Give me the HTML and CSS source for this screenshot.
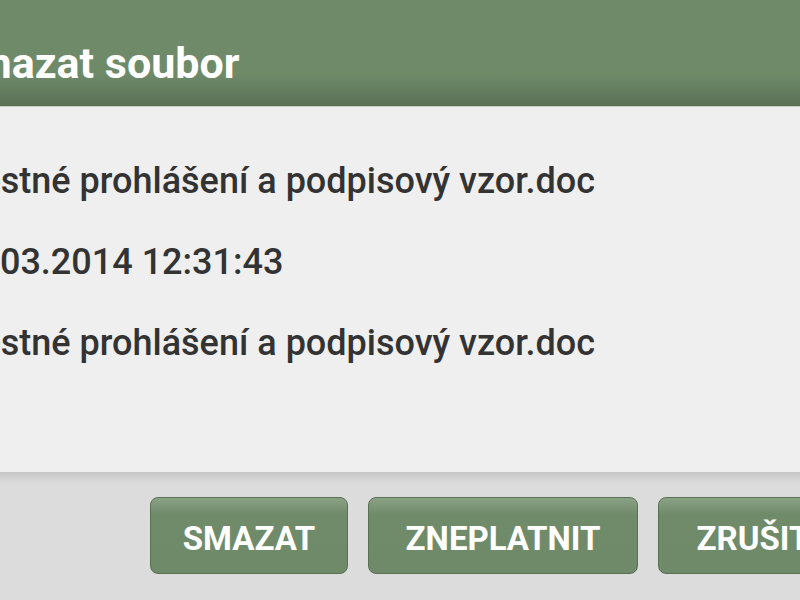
FILE: index.html
```html
<!DOCTYPE html>
<html lang="cs">
<head>
<meta charset="utf-8">
<title>Smazat soubor</title>
<link rel="stylesheet" href="styles.css">
</head>
<body>
<div class="dialog">
  <header class="dialog-header">
    <h1 class="dialog-title">Smazat soubor</h1>
  </header>
  <section class="dialog-body">
    <p class="row">Čestné prohlášení a podpisový vzor.doc</p>
    <p class="row row-date">14.03.2014 12:31:43</p>
    <p class="row">Čestné prohlášení a podpisový vzor.doc</p>
  </section>
  <footer class="dialog-footer">
    <button class="btn btn-delete" type="button">SMAZAT</button>
    <button class="btn btn-invalidate" type="button">ZNEPLATNIT</button>
    <button class="btn btn-cancel" type="button">ZRUŠIT</button>
  </footer>
</div>
</body>
</html>
```

FILE: styles.css
```css
html, body {
  margin: 0;
  padding: 0;
  height: 100%;
  overflow: hidden;
  background: #dcdcdc;
}

.dialog {
  margin-left: -52px;
  width: 960px;
  display: flex;
  flex-direction: column;
  height: 100%;
  font-family: Roboto, "Noto Sans", sans-serif;
}

.dialog-header {
  box-sizing: border-box;
  height: 107px;
  padding-top: 42px;
  background: linear-gradient(to bottom, #6e8a69 0%, #6e8a69 70%, #5a7055 100%);
  border-bottom: 1px solid #c9cec7;
}

.dialog-title {
  margin: 0;
  font-size: 43px;
  line-height: 43px;
  font-weight: 700;
  color: #ffffff;
  white-space: nowrap;
}

.dialog-body {
  box-sizing: border-box;
  height: 365px;
  padding: 56px 0 0 10px;
  background: #efefef;
  display: flex;
  flex-direction: column;
  gap: 45px;
}

.row {
  margin: 0;
  font-size: 36px;
  line-height: 36px;
  font-weight: 500;
  color: #333333;
  white-space: nowrap;
}

.row-date {
  margin-left: -9px;
}

.dialog-footer {
  flex: 1;
  display: flex;
  align-items: flex-start;
  gap: 20px;
  padding: 25px 0 0 202px;
  background: linear-gradient(to bottom, #c6c6c6 0px, #dcdcdc 12px, #dcdcdc 100%);
}

.btn {
  box-sizing: border-box;
  height: 77px;
  padding: 6px 0 0;
  border: 1px solid #5a7055;
  border-radius: 8px;
  background: linear-gradient(to bottom, #8aa285 0px, #708b6a 16px, #6e8a69 100%);
  font-family: Roboto, "Noto Sans", sans-serif;
  font-size: 33px;
  line-height: 33px;
  font-weight: 700;
  color: #ffffff;
  text-align: center;
  white-space: nowrap;
  flex-shrink: 0;
}

.btn-delete {
  width: 198px;
}

.btn-invalidate {
  width: 270px;
}

.btn-cancel {
  width: 190px;
}
```
